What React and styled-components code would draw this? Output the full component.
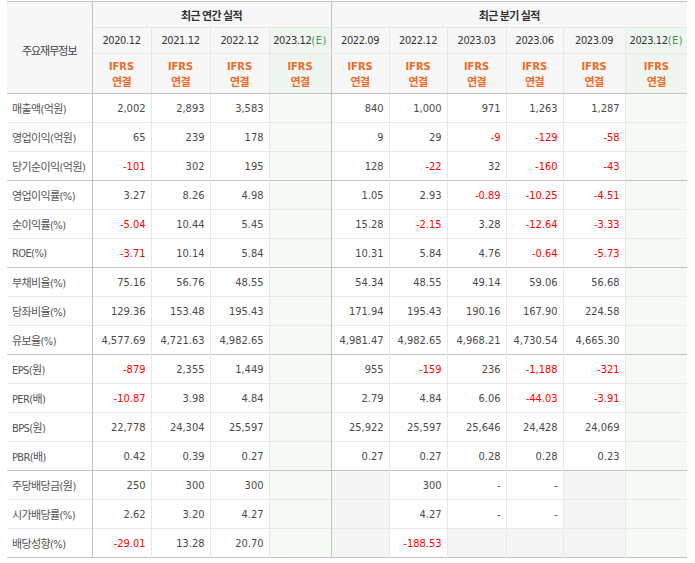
import React from 'react';
import styled, { createGlobalStyle } from 'styled-components';

const GlobalStyle = createGlobalStyle`
  html, body {
    margin: 0;
    padding: 0;
    background: #fff;
  }
  body {
    font-family: "DejaVu Sans Condensed", "DejaVu Sans", "Noto Sans CJK KR", sans-serif;
  }
`;

const LIGHT = '#e8e8e8';
const DARK = '#c4c4c4';

const Wrap = styled.div`
  padding: 1px 0 0 7px;
`;

const Table = styled.table`
  width: 680px;
  table-layout: fixed;
  border-collapse: collapse;
  border-top: 1px solid ${DARK};
  border-bottom: 1px solid ${DARK};
  font-size: 11px;
`;

const HeadCell = styled.th`
  background: ${(p) => (p.$est ? '#eff6ef' : '#f7f7f7')};
  color: #333;
  font-weight: normal;
  height: ${(p) => p.$h || 25}px;
  padding: 0;
  text-align: center;
  vertical-align: middle;
  border-bottom: 1px solid ${(p) => (p.$last ? DARK : LIGHT)};
  border-left: 1px solid ${(p) => (p.$section ? DARK : LIGHT)};
  letter-spacing: -0.4px;
`;

const CornerCell = styled(HeadCell)`
  border-left: none;
  border-right: 1px solid ${DARK};
  border-bottom: 1px solid ${DARK};
  font-family: "Noto Sans CJK KR", sans-serif;
  font-size: 11px;
  letter-spacing: -1px;
  color: #444;
  padding-top: 4px;
`;

const GroupTitle = styled.span`
  font-family: "Noto Sans CJK KR", sans-serif;
  font-weight: 700;
  font-size: 11px;
  letter-spacing: -0.6px;
  color: #333;
`;

const Est = styled.span`
  color: #3f9a55;
  letter-spacing: 0.5px;
`;

const Ifrs = styled.div`
  color: #f06a24;
  font-weight: 700;
  line-height: 14px;
  font-size: 11px;
  letter-spacing: 0;
`;

const Kor = styled.div`
  color: #f06a24;
  font-weight: 700;
  line-height: 14px;
  font-family: "Noto Sans CJK KR", sans-serif;
  font-size: 11px;
  letter-spacing: -0.6px;
`;

const Row = styled.tr`
  & > td {
    border-top: 1px solid ${(p) => (p.$sep ? DARK : LIGHT)};
  }
`;

const Label = styled.td`
  height: 28px;
  padding: 0 0 0 5px;
  color: #555;
  text-align: left;
  vertical-align: middle;
  border-right: 1px solid ${DARK};
  font-family: "DejaVu Sans Condensed", "Noto Sans CJK KR", sans-serif;
  letter-spacing: -0.6px;
  white-space: nowrap;
`;

const Cell = styled.td`
  height: 28px;
  padding: 0 5px 0 0;
  text-align: right;
  vertical-align: middle;
  color: ${(p) => (p.$neg ? '#ff0000' : '#4a4a4a')};
  background: ${(p) => (p.$est ? '#f5faf5' : p.$gray ? '#f5f5f5' : '#fff')};
  border-left: 1px solid ${(p) => (p.$section ? DARK : LIGHT)};
  white-space: nowrap;
`;

const annual = ['2020.12', '2021.12', '2022.12'];
const quarter = ['2022.09', '2022.12', '2023.03', '2023.06', '2023.09'];

// null = empty gray cell
const rows = [
  ['매출액(억원)', ['2,002', '2,893', '3,583'], ['840', '1,000', '971', '1,263', '1,287']],
  ['영업이익(억원)', ['65', '239', '178'], ['9', '29', '-9', '-129', '-58']],
  ['당기순이익(억원)', ['-101', '302', '195'], ['128', '-22', '32', '-160', '-43']],
  ['영업이익률(%)', ['3.27', '8.26', '4.98'], ['1.05', '2.93', '-0.89', '-10.25', '-4.51'], true],
  ['순이익률(%)', ['-5.04', '10.44', '5.45'], ['15.28', '-2.15', '3.28', '-12.64', '-3.33']],
  ['ROE(%)', ['-3.71', '10.14', '5.84'], ['10.31', '5.84', '4.76', '-0.64', '-5.73']],
  ['부채비율(%)', ['75.16', '56.76', '48.55'], ['54.34', '48.55', '49.14', '59.06', '56.68'], true],
  ['당좌비율(%)', ['129.36', '153.48', '195.43'], ['171.94', '195.43', '190.16', '167.90', '224.58']],
  ['유보율(%)', ['4,577.69', '4,721.63', '4,982.65'], ['4,981.47', '4,982.65', '4,968.21', '4,730.54', '4,665.30']],
  ['EPS(원)', ['-879', '2,355', '1,449'], ['955', '-159', '236', '-1,188', '-321'], true],
  ['PER(배)', ['-10.87', '3.98', '4.84'], ['2.79', '4.84', '6.06', '-44.03', '-3.91']],
  ['BPS(원)', ['22,778', '24,304', '25,597'], ['25,922', '25,597', '25,646', '24,428', '24,069']],
  ['PBR(배)', ['0.42', '0.39', '0.27'], ['0.27', '0.27', '0.28', '0.28', '0.23']],
  ['주당배당금(원)', ['250', '300', '300'], [null, '300', '-', '-', null], true],
  ['시가배당률(%)', ['2.62', '3.20', '4.27'], [null, '4.27', '-', '-', null]],
  ['배당성향(%)', ['-29.01', '13.28', '20.70'], [null, '-188.53', null, null, null]],
];

const isNeg = (v) => typeof v === 'string' && v.startsWith('-') && v.length > 1;

const IfrsHead = ({ est, section }) => (
  <HeadCell $h={39} $last $est={est} $section={section}>
    <Ifrs>IFRS</Ifrs>
    <Kor>연결</Kor>
  </HeadCell>
);

export default function App() {
  return (
    <Wrap>
      <GlobalStyle />
      <Table>
        <colgroup>
          <col style={{ width: 85 }} />
          <col style={{ width: 59 }} />
          <col style={{ width: 59 }} />
          <col style={{ width: 59 }} />
          <col style={{ width: 62 }} />
          <col style={{ width: 58 }} />
          <col style={{ width: 58 }} />
          <col style={{ width: 59 }} />
          <col style={{ width: 57 }} />
          <col style={{ width: 62 }} />
          <col style={{ width: 62 }} />
        </colgroup>
        <thead>
          <tr>
            <CornerCell rowSpan={3}>주요재무정보</CornerCell>
            <HeadCell colSpan={4} $h={25}>
              <GroupTitle>최근 연간 실적</GroupTitle>
            </HeadCell>
            <HeadCell colSpan={6} $h={25} $section>
              <GroupTitle>최근 분기 실적</GroupTitle>
            </HeadCell>
          </tr>
          <tr>
            {annual.map((d) => (
              <HeadCell key={d}>{d}</HeadCell>
            ))}
            <HeadCell $est>
              2023.12<Est>(E)</Est>
            </HeadCell>
            {quarter.map((d, i) => (
              <HeadCell key={d} $section={i === 0}>
                {d}
              </HeadCell>
            ))}
            <HeadCell $est>
              2023.12<Est>(E)</Est>
            </HeadCell>
          </tr>
          <tr>
            {annual.map((d) => (
              <IfrsHead key={d} />
            ))}
            <IfrsHead est />
            {quarter.map((d, i) => (
              <IfrsHead key={d} section={i === 0} />
            ))}
            <IfrsHead est />
          </tr>
        </thead>
        <tbody>
          {rows.map(([label, a, q, sep], ri) => (
            <Row key={label} $sep={sep || ri === 0}>
              <Label>{label}</Label>
              {a.map((v, i) => (
                <Cell key={i} $neg={isNeg(v)}>
                  {v}
                </Cell>
              ))}
              <Cell $est />
              {q.map((v, i) => (
                <Cell key={i} $section={i === 0} $gray={v === null} $neg={isNeg(v)}>
                  {v}
                </Cell>
              ))}
              <Cell $est />
            </Row>
          ))}
        </tbody>
      </Table>
    </Wrap>
  );
}
